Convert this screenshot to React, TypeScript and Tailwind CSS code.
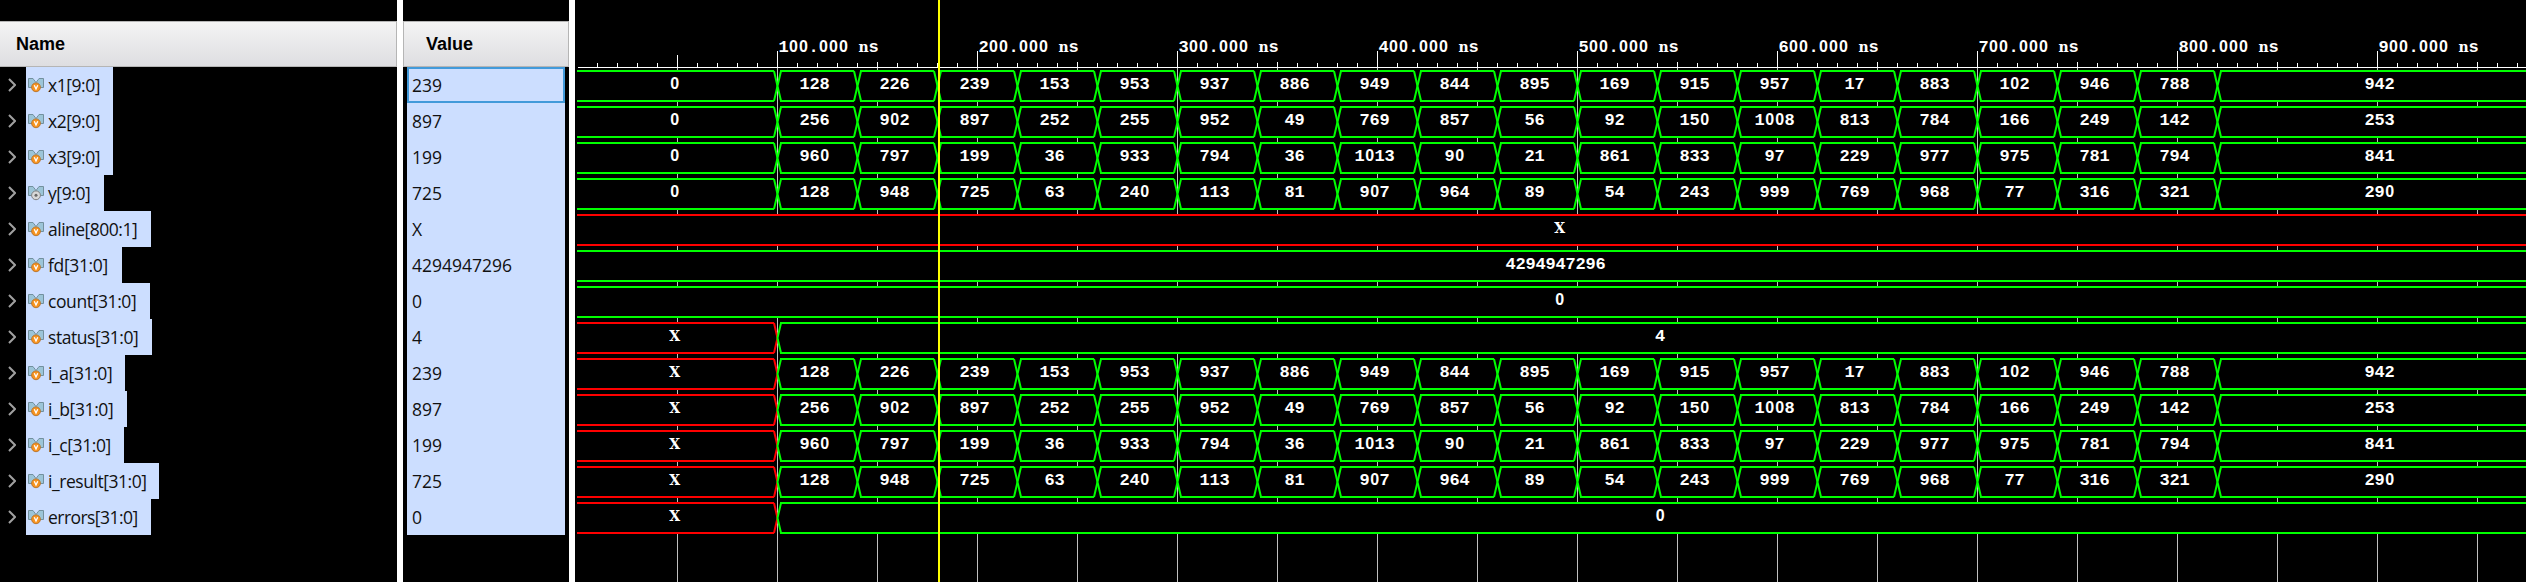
const A = [128,226,239,153,953,937,886,949,844,895,169,915,957,17,883,102,946,788,942];
const B = [256,902,897,252,255,952,49,769,857,56,92,150,1008,813,784,166,249,142,253];
const C = [960,797,199,36,933,794,36,1013,90,21,861,833,97,229,977,975,781,794,841];
const R = [128,948,725,63,240,113,81,907,964,89,54,243,999,769,968,77,316,321,290];

type Kind = 'bus' | 'flatX' | 'flat' | 'late';
type Signal = { name: string; value: string; width: string; spacing: string; kind: Kind; first?: string; data?: number[]; label?: string; out?: boolean };

const signals: Signal[] = [
  { name: 'x1[9:0]', value: '239', width: 'w-[87px]', spacing: 'tracking-[-0.45px]', kind: 'bus', first: '0', data: A },
  { name: 'x2[9:0]', value: '897', width: 'w-[87px]', spacing: 'tracking-[-0.45px]', kind: 'bus', first: '0', data: B },
  { name: 'x3[9:0]', value: '199', width: 'w-[87px]', spacing: 'tracking-[-0.45px]', kind: 'bus', first: '0', data: C },
  { name: 'y[9:0]', value: '725', width: 'w-[78px]', spacing: 'tracking-[-0.4px]', kind: 'bus', first: '0', data: R, out: true },
  { name: 'aline[800:1]', value: 'X', width: 'w-[125px]', spacing: 'tracking-[-0.5px]', kind: 'flatX', label: 'X' },
  { name: 'fd[31:0]', value: '4294947296', width: 'w-[96px]', spacing: 'tracking-[-0.35px]', kind: 'flat', label: '4294947296' },
  { name: 'count[31:0]', value: '0', width: 'w-[124px]', spacing: 'tracking-[-0.4px]', kind: 'flat', label: '0' },
  { name: 'status[31:0]', value: '4', width: 'w-[126px]', spacing: 'tracking-[-0.45px]', kind: 'late', first: 'X', label: '4' },
  { name: 'i_a[31:0]', value: '239', width: 'w-[99px]', spacing: 'tracking-[-0.4px]', kind: 'bus', first: 'X', data: A },
  { name: 'i_b[31:0]', value: '897', width: 'w-[101px]', spacing: 'tracking-[-0.4px]', kind: 'bus', first: 'X', data: B },
  { name: 'i_c[31:0]', value: '199', width: 'w-[98px]', spacing: 'tracking-[-0.4px]', kind: 'bus', first: 'X', data: C },
  { name: 'i_result[31:0]', value: '725', width: 'w-[133px]', spacing: 'tracking-[-0.45px]', kind: 'bus', first: 'X', data: R },
  { name: 'errors[31:0]', value: '0', width: 'w-[125px]', spacing: 'tracking-[-0.55px]', kind: 'late', first: 'X', label: '0' },
];

const GREEN = '#00ff00';
const RED = '#ff0000';
const ORIGIN = 575;

// A plain zero and slab letters, mixed with monoline digits, on a 10px grid.
function glyphClass(c: string) {
  if (c === '0') return "font-['Liberation_Sans',sans-serif] text-[16px] font-bold";
  if (/[Xn]/.test(c)) return "font-['DejaVu_Serif',serif] text-[14px] font-bold";
  return "font-['Liberation_Mono',monospace] text-[17px] font-bold";
}

function MonoText({ start, y, text }: { start: number; y: number; text: string }) {
  return (
    <text y={y} textAnchor="middle" fill="#fff">
      {text.split('').map((c, i) => (
        <tspan key={i} x={start + i * 10 + 5} className={glyphClass(c)}>{c}</tspan>
      ))}
    </text>
  );
}

function Label({ center, y, text }: { center: number; y: number; text: string }) {
  return <MonoText start={center - 2.4 - text.length * 5} y={y} text={text} />;
}

function Segment({ from, to, y, color, openLeft, openRight }: { from: number; to: number; y: number; color: string; openLeft?: boolean; openRight?: boolean }) {
  const t = y + 1;
  const b = y + 31;
  const m = y + 16;
  const left = openLeft ? [`${from},${b}`, `${from},${t}`] : [`${from + 4},${b}`, `${from + 0.5},${m}`, `${from + 4},${t}`];
  const right = openRight ? [`${to},${t}`, `${to},${b}`] : [`${to - 3},${t}`, `${to + 0.5},${m}`, `${to - 3},${b}`];
  const slope = (a: number, c: number) => <path d={`M${a} ${t}L${c} ${m}L${a} ${b}`} strokeWidth="2" />;
  const l = openLeft ? from : from + 3;
  const r = openRight ? to : to - 3;
  return (
    <g fill="none" stroke={color}>
      <polygon points={[...left, ...right].join(' ')} fill="#000" stroke="none" />
      <path d={`M${l} ${t}H${r}M${l} ${b}H${r}`} strokeWidth="2" shapeRendering="crispEdges" />
      {!openLeft && slope(from + 4, from + 0.5)}
      {!openRight && slope(to - 3, to + 0.5)}
    </g>
  );
}

function Wave({ s, y }: { s: Signal; y: number }) {
  const base = y + 19;
  const end = 2530;
  if (s.kind === 'flat' || s.kind === 'flatX')
    return (
      <g>
        <Segment from={577} to={end} y={y} color={s.kind === 'flat' ? GREEN : RED} openLeft openRight />
        <Label center={s.label!.length > 1 ? 1558 : 1562} y={base} text={s.label!} />
      </g>
    );
  return (
    <g>
      <Segment from={577} to={777} y={y} color={s.first === 'X' ? RED : GREEN} openLeft />
      <Label center={677} y={base} text={s.first!} />
      {s.kind === 'late' ? (
        <>
          <Segment from={777} to={end} y={y} color={GREEN} openRight />
          <Label center={1662.5} y={base} text={s.label!} />
        </>
      ) : (
        s.data!.map((v, i) => {
          const from = 777 + i * 80;
          const last = i === s.data!.length - 1;
          return (
            <g key={i}>
              <Segment from={from} to={last ? end : from + 80} y={y} color={GREEN} openRight={last} />
              <Label center={last ? 2382 : from + 40} y={base} text={String(v)} />
            </g>
          );
        })
      )}
    </g>
  );
}

function WaveChart() {
  const ticks = Array.from({ length: 97 }, (_, i) => i + 1);
  return (
    <svg width="1951" height="582" viewBox={`${ORIGIN} 0 1951 582`} className="block bg-black">
      <g shapeRendering="crispEdges">
        {ticks.map((n) => {
          const x = 577 + n * 20;
          const top = n % 10 === 0 ? 51 : n === 5 ? 55 : n % 5 === 0 ? 62 : 63;
          return <rect key={n} x={x} y={top} width="1" height={68 - top} fill="#fff" />;
        })}
        {ticks.filter((n) => n % 5 === 0).map((n) => (
          <rect key={n} x={577 + n * 20} y={68} width="1" height="514" fill="#c0c0c0" />
        ))}
        <rect x="578" y="67" width="1948" height="1" fill="#fff" />
      </g>
      {[1, 2, 3, 4, 5, 6, 7, 8, 9].map((n) => (
        <MonoText key={n} start={578.5 + n * 200} y={52} text={`${n}00.000 ns`} />
      ))}
      {signals.map((s, i) => (
        <Wave key={s.name} s={s} y={70 + i * 36} />
      ))}
      <rect x="938" y="0" width="2" height="582" fill="#ffff00" shapeRendering="crispEdges" />
    </svg>
  );
}

function SignalIcon({ out }: { out?: boolean }) {
  return (
    <svg width="16" height="15" viewBox="0 0 16 15" className="block shrink-0">
      <path d="M.5 .5H5L8 4.5L11 .5H15.5V9.5H.5Z" fill="#9cc5d8" stroke="#73909e" />
      <path d="M5.6 0H10.4L8 3.5Z" fill="#ccdeff" />
      <circle cx="8" cy="9.3" r="4.4" fill={out ? '#d8d8d8' : '#f7931e'} stroke={out ? '#777' : '#b5722a'} strokeWidth=".9" />
      {out ? <circle cx="8" cy="9.3" r="1.5" fill="#666" /> : <path d="M6.3 7.3L8 11L9.7 7.3" fill="none" stroke="#fff" strokeWidth="1.3" />}
    </svg>
  );
}

const header = "flex h-[46px] items-center border-y border-[#b5b5b5] bg-linear-to-b from-[#f4f4f4] to-[#dedee1] pt-px font-['Liberation_Sans',Arial,sans-serif] text-[18px] font-bold text-black";

export default function App() {
  return (
    <div className="flex h-[582px] w-[2526px] overflow-hidden bg-black font-['Open_Sans','Noto_Sans',sans-serif] text-[17.5px] text-[#111]">
      <div className="w-[397px] shrink-0 pt-[21px]">
        <div className={`${header} border-r pl-4`}>Name</div>
        {signals.map((s) => (
          <div key={s.name} className="flex h-9">
            <div className="flex w-[26px] items-center pl-2">
              <svg width="8" height="14" viewBox="0 0 8 14" className="mb-px">
                <path d="M1 1L7 7L1 13" fill="none" stroke="#a0a0a0" strokeWidth="2" />
              </svg>
            </div>
            <div className={`${s.width} flex items-start bg-[#ccdeff] pl-0.5`}>
              <div className="pt-[11px]"><SignalIcon out={s.out} /></div>
              <span className={`${s.spacing} ml-1 whitespace-nowrap leading-9`}>{s.name}</span>
            </div>
          </div>
        ))}
      </div>
      <div className="w-1.5 shrink-0 bg-white" />
      <div className="w-[166px] shrink-0 pt-[21px]">
        <div className={`${header} border-x pl-[22px]`}>Value</div>
        {signals.map((s, i) => (
          <div key={s.name} className={`ml-1 h-9 w-[158px] bg-[#ccdeff] pl-[5px] leading-9 ${i === 0 ? 'outline-2 -outline-offset-2 outline-[#429ada]' : ''}`}>
            {s.value}
          </div>
        ))}
      </div>
      <div className="w-1.5 shrink-0 bg-white" />
      <WaveChart />
    </div>
  );
}
